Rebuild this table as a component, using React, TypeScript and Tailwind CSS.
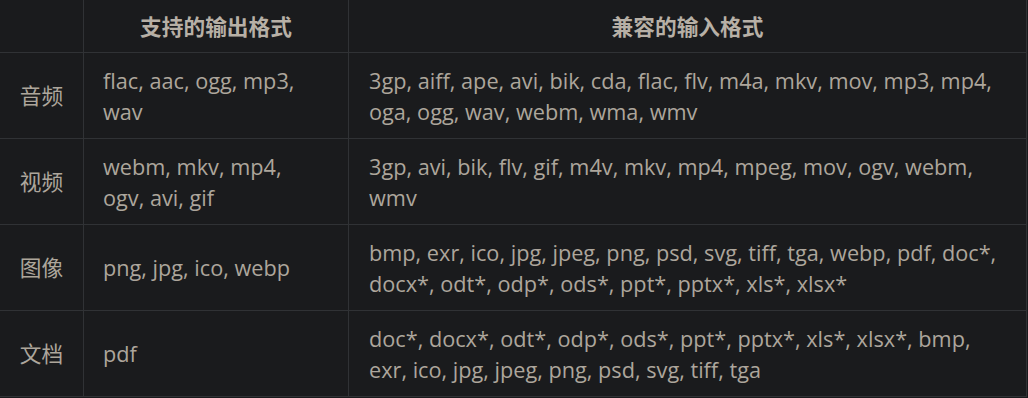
const rows = [
  {
    type: "音频",
    output: "flac, aac, ogg, mp3, wav",
    input: "3gp, aiff, ape, avi, bik, cda, flac, flv, m4a, mkv, mov, mp3, mp4, oga, ogg, wav, webm, wma, wmv",
  },
  {
    type: "视频",
    output: "webm, mkv, mp4, ogv, avi, gif",
    input: "3gp, avi, bik, flv, gif, m4v, mkv, mp4, mpeg, mov, ogv, webm, wmv",
  },
  {
    type: "图像",
    output: "png, jpg, ico, webp",
    input: "bmp, exr, ico, jpg, jpeg, png, psd, svg, tiff, tga, webp, pdf, doc*, docx*, odt*, odp*, ods*, ppt*, pptx*, xls*, xlsx*",
  },
  {
    type: "文档",
    output: "pdf",
    input: "doc*, docx*, odt*, odp*, ods*, ppt*, pptx*, xls*, xlsx*, bmp, exr, ico, jpg, jpeg, png, psd, svg, tiff, tga",
  },
]

const cell = "border-r border-b border-[#303235]"

function App() {
  return (
    <div
      className="h-[398px] w-[1028px] overflow-hidden bg-[#1a1b1d] text-[21.7px] leading-[31px] text-[#ada69c]"
      style={{ fontFamily: '"Open Sans", "Noto Sans CJK SC", sans-serif' }}
    >
      <div className="grid w-[1027px] grid-cols-[84px_265px_678px] border-r border-[#3a3c3f]">
        <div className={`${cell} h-[53px]`} />
        <div className={`${cell} flex h-[53px] items-center justify-center font-bold text-[#b7b0a6]`}>
          支持的输出格式
        </div>
        <div className={`${cell} flex h-[53px] items-center justify-center font-bold text-[#b7b0a6]`}>
          兼容的输入格式
        </div>

        {rows.map((row) => (
          <div key={row.type} className="contents">
            <div className={`${cell} flex h-[86px] items-center justify-center`}>
              {row.type}
            </div>
            <div className={`${cell} flex h-[86px] items-center pl-[19px] pr-7`}>
              <p>{row.output}</p>
            </div>
            <div className={`${cell} flex h-[86px] items-center pl-[20px] pr-5`}>
              <p>{row.input}</p>
            </div>
          </div>
        ))}
      </div>
    </div>
  )
}

export default App
